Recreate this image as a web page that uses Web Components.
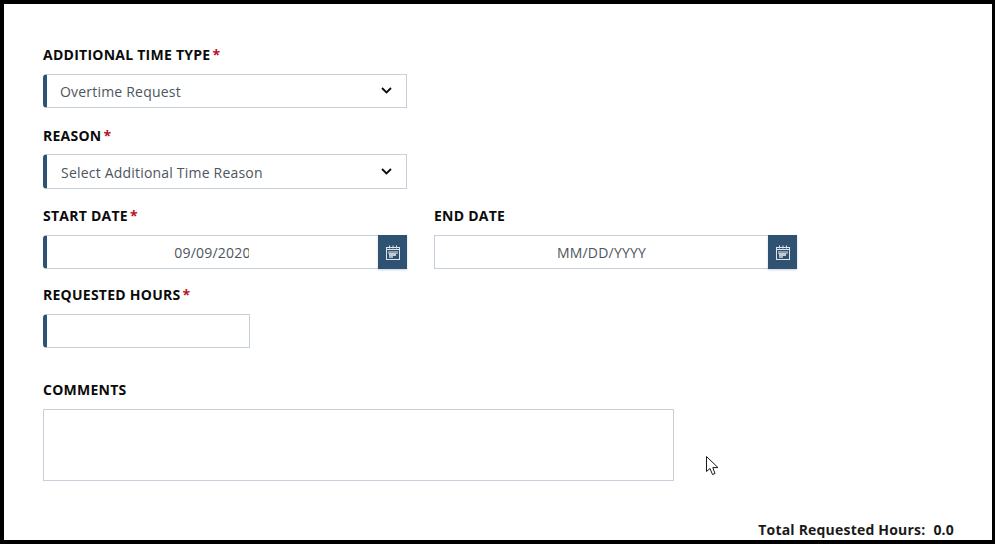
<!DOCTYPE html>
<html>
<head>
<meta charset="utf-8">
<title>Additional Time</title>
<style>
  html, body { margin: 0; padding: 0; background: #000; }
  body { font-family: "Open Sans", sans-serif; }
</style>
</head>
<body>
<time-form>
  <form-field label="ADDITIONAL TIME TYPE" required style="height:81px">
    <select-box value="Overtime Request" text-left="13"></select-box>
  </form-field>
  <form-field label="REASON" required label-gap="7" style="height:80px">
    <select-box value="Select Additional Time Reason" text-left="14" text-top="2" box-height="35"></select-box>
  </form-field>
  <date-row>
    <form-field label="START DATE" required><date-box value="09/09/2020" clip-right="129" required></date-box></form-field>
    <form-field label="END DATE"><date-box value="MM/DD/YYYY"></date-box></form-field>
  </date-row>
  <form-field label="REQUESTED HOURS" required style="height:95px">
    <text-box style="width:207px" required></text-box>
  </form-field>
  <form-field label="COMMENTS" style="height:120px">
    <text-box style="width:631px;height:72px"></text-box>
  </form-field>
  <total-hours label="Total Requested Hours:" value="0.0"></total-hours>
  <mouse-cursor></mouse-cursor>
</time-form>

<script>
// page frame, black edge around the white form
class TimeForm extends HTMLElement {
  constructor() {
    super();
    const shadow = this.attachShadow({ mode: 'open' });
    shadow.innerHTML = `
      <style>
        :host {
          display: block;
          box-sizing: border-box;
          width: 995px;
          height: 544px;
          border: solid #000;
          border-width: 4px 3px 4px 4px;
          background: #fff;
          overflow: hidden;
          position: relative;
        }
        .body {
          padding: 40px 0 0 39px;
        }
      </style>
      <div class="body"><slot></slot></div>
    `;
  }
}

class FormField extends HTMLElement {
  constructor() {
    super();
    const shadow = this.attachShadow({ mode: 'open' });
    const star = this.hasAttribute('required') ? '<span class="star">*</span>' : '';
    const gap = this.getAttribute('label-gap') || '8';
    shadow.innerHTML = `
      <style>
        :host {
          display: block;
          font-family: "Open Sans", sans-serif;
        }
        .label {
          height: 22px;
          margin-bottom: ${gap}px;
          font-size: 14px;
          line-height: 22px;
          font-weight: 700;
          color: #0b0b0b;
          letter-spacing: 0.25px;
          white-space: nowrap;
        }
        .star {
          color: #b5121b;
          margin-left: 2px;
        }
      </style>
      <div class="label">${this.getAttribute('label')}${star}</div>
      <slot></slot>
    `;
  }
}

class SelectBox extends HTMLElement {
  constructor() {
    super();
    const shadow = this.attachShadow({ mode: 'open' });
    const left = this.getAttribute('text-left') || '12';
    const top = this.getAttribute('text-top') || '0';
    const height = this.getAttribute('box-height') || '34';
    shadow.innerHTML = `
      <style>
        :host {
          display: block;
          box-sizing: border-box;
          width: 364px;
          height: ${height}px;
          border: 1px solid #c5d0da;
          border-left: 4px solid #2f5272;
          border-radius: 4px 0 0 4px;
          font-family: "Open Sans", sans-serif;
        }
        .in {
          display: flex;
          align-items: center;
          justify-content: space-between;
          height: 100%;
          padding: 0 14px 0 ${left}px;
          font-size: 14px;
          letter-spacing: 0.2px;
          color: #4d5560;
        }
        .in span { margin-top: ${top}px; }
        svg { display: block; margin-top: -1px; }
      </style>
      <div class="in">
        <span>${this.getAttribute('value')}</span>
        <svg width="11" height="7" viewBox="0 0 11 7"><path d="M1 1l4.5 4.5L10 1" fill="none" stroke="#0b0b0b" stroke-width="1.8"/></svg>
      </div>
    `;
  }
}

class DateRow extends HTMLElement {
  constructor() {
    super();
    const shadow = this.attachShadow({ mode: 'open' });
    shadow.innerHTML = `
      <style>
        :host {
          display: grid;
          grid-template-columns: 364px 363px;
          column-gap: 27px;
          height: 79px;
        }
      </style>
      <slot></slot>
    `;
  }
}

class DateBox extends HTMLElement {
  constructor() {
    super();
    const shadow = this.attachShadow({ mode: 'open' });
    const edge = this.hasAttribute('required')
      ? 'border-left: 4px solid #2f5272; border-radius: 4px 0 0 4px;'
      : 'border-left: 1px solid #c5d0da;';
    // the start date is cut off by its input in the reference
    const clip = this.getAttribute('clip-right') || '0';
    shadow.innerHTML = `
      <style>
        :host {
          display: flex;
          height: 34px;
          font-family: "Open Sans", sans-serif;
        }
        .val {
          flex: 1;
          box-sizing: border-box;
          border: 1px solid #c5d0da;
          border-right: 0;
          ${edge}
          display: flex;
          align-items: center;
          font-size: 14px;
          letter-spacing: 0.2px;
          color: #4d5560;
        }
        .val span {
          flex: 1;
          text-align: center;
          clip-path: inset(0 ${clip}px 0 0);
        }
        .btn {
          flex: 0 0 29px;
          background: #2f5272;
          display: flex;
          align-items: center;
          justify-content: center;
          box-shadow: 0 1px 2px rgba(47, 82, 114, 0.25);
        }
        svg { display: block; }
      </style>
      <div class="val"><span>${this.getAttribute('value')}</span></div>
      <div class="btn">
        <svg width="14" height="15" viewBox="0 0 14 15">
          <rect x="0.5" y="2.5" width="13" height="12" fill="none" stroke="#dfe5eb"/>
          <path d="M1 4.5h12" stroke="#dfe5eb" stroke-width="1"/>
          <path d="M3.5 0.5v3M7 0.5v3M10.5 0.5v3" stroke="#dfe5eb"/>
          <rect x="2" y="6" width="10" height="3" fill="#8a9db0"/>
          <rect x="3" y="8" width="7" height="3" fill="#c3cdd6"/>
          <rect x="3" y="11" width="4" height="2" fill="#a9b7c4"/>
        </svg>
      </div>
    `;
  }
}

class TextBox extends HTMLElement {
  constructor() {
    super();
    const shadow = this.attachShadow({ mode: 'open' });
    const edge = this.hasAttribute('required')
      ? 'border-left: 4px solid #2f5272; border-radius: 4px 0 0 4px;'
      : '';
    shadow.innerHTML = `
      <style>
        :host {
          display: block;
          box-sizing: border-box;
          height: 34px;
          border: 1px solid #c5d0da;
          ${edge}
        }
      </style>
    `;
  }
}

class TotalHours extends HTMLElement {
  constructor() {
    super();
    const shadow = this.attachShadow({ mode: 'open' });
    shadow.innerHTML = `
      <style>
        :host {
          display: flex;
          justify-content: flex-end;
          gap: 8px;
          width: 911px;
          margin-top: 21px;
          font-family: "Open Sans", sans-serif;
          font-size: 14px;
          line-height: 20px;
          font-weight: 700;
          letter-spacing: 0.2px;
          color: #1a1a1a;
          white-space: nowrap;
        }
      </style>
      <span>${this.getAttribute('label')}</span>
      <span>${this.getAttribute('value')}</span>
    `;
  }
}

// the mouse pointer caught in the screenshot, lies over the page
class MouseCursor extends HTMLElement {
  constructor() {
    super();
    const shadow = this.attachShadow({ mode: 'open' });
    shadow.innerHTML = `
      <style>
        :host {
          position: absolute;
          left: 702px;
          top: 452px;
          width: 14px;
          height: 20px;
        }
        svg { display: block; }
      </style>
      <svg width="14" height="20" viewBox="0 0 14 20">
        <path d="M0.5 0.5V15.5L4 12.5L6.5 18.5L9 17.5L6.8 11.6H12Z" fill="#fff" stroke="#1a1a1a" stroke-width="1" stroke-linejoin="miter"/>
      </svg>
    `;
  }
}

customElements.define('time-form', TimeForm);
customElements.define('form-field', FormField);
customElements.define('select-box', SelectBox);
customElements.define('date-row', DateRow);
customElements.define('date-box', DateBox);
customElements.define('text-box', TextBox);
customElements.define('total-hours', TotalHours);
customElements.define('mouse-cursor', MouseCursor);
</script>
</body>
</html>
